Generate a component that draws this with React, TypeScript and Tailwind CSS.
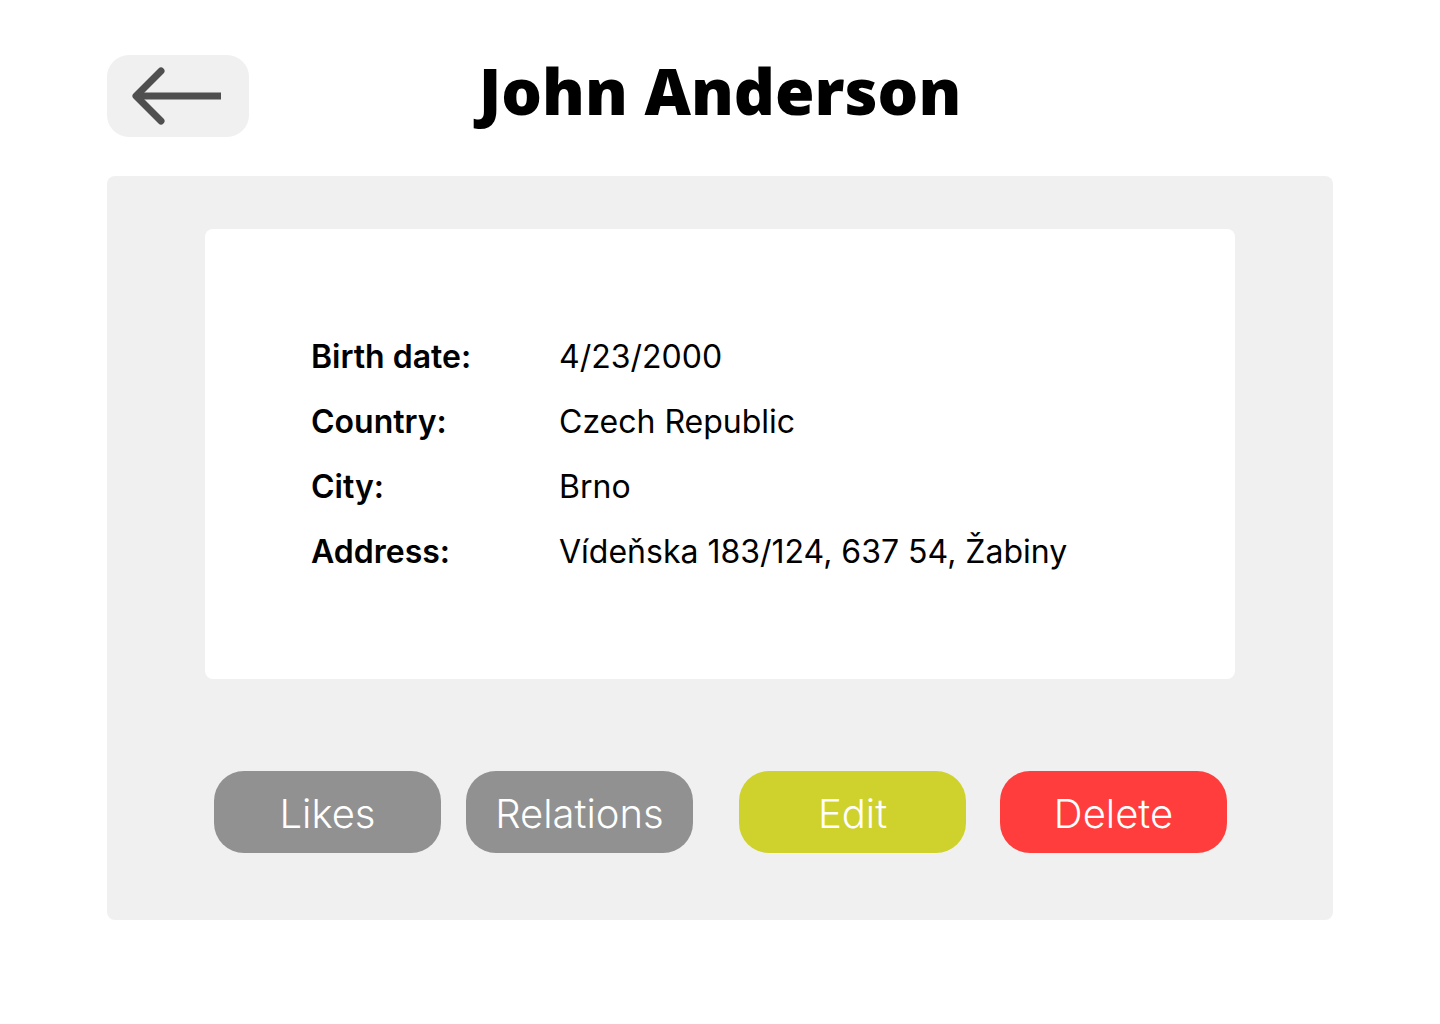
import { ReactNode } from "react";

const DETAILS = [
  { label: "Birth date:", value: "4/23/2000" },
  { label: "Country:", value: "Czech Republic" },
  { label: "City:", value: "Brno" },
  { label: "Address:", value: "Vídeňska 183/124, 637 54, Žabiny" },
];

function PillButton({ children, className }: { children: ReactNode; className: string }) {
  return (
    <button
      className={
        "w-[227px] h-[82px] rounded-[30px] flex items-center justify-center pt-[3px] text-white text-[40px] font-light leading-none " +
        className
      }
    >
      {children}
    </button>
  );
}

export default function App() {
  return (
    <div
      className="min-h-[1024px] bg-white px-[107px] pt-[55px]"
      style={{ fontFamily: "Inter, 'Noto Sans', sans-serif" }}
    >
      {/* Header */}
      <div className="grid grid-cols-[142px_1fr_142px] items-center">
        <button
          aria-label="Back"
          className="w-[142px] h-[82px] rounded-[22px] bg-[#f0f0f0] flex items-center justify-center"
        >
          <svg width="142" height="82" viewBox="0 0 142 82" fill="none">
            <path d="M29 41 H114" stroke="#4f4f4f" strokeWidth="7" />
            <path
              d="M54 16 L29 41 L54 66"
              stroke="#4f4f4f"
              strokeWidth="7"
              strokeLinecap="round"
              strokeLinejoin="round"
            />
          </svg>
        </button>
        <h1
          className="text-center text-[64px] font-extrabold text-black leading-none -mt-[11px]"
          style={{ fontFamily: "'Open Sans', sans-serif" }}
        >
          John Anderson
        </h1>
        <div />
      </div>

      {/* Panel */}
      <div className="mt-[39px] h-[744px] rounded-lg bg-[#f0f0f0] pt-[53px]">
        <div className="mx-[98px] h-[450px] rounded-lg bg-white pt-[95px] pl-[106px]">
          {DETAILS.map((d) => (
            <div key={d.label} className="flex h-[65px] items-center text-[32px] text-black">
              <span className="w-[248px] font-semibold">{d.label}</span>
              <span>{d.value}</span>
            </div>
          ))}
        </div>

        <div className="mt-[92px] flex pl-[107px]">
          <PillButton className="bg-[#919191]">Likes</PillButton>
          <PillButton className="ml-[25px] bg-[#919191]">Relations</PillButton>
          <PillButton className="ml-[46px] bg-[#cfd22d]">Edit</PillButton>
          <PillButton className="ml-[34px] bg-[#ff3d3d]">Delete</PillButton>
        </div>
      </div>
    </div>
  );
}
